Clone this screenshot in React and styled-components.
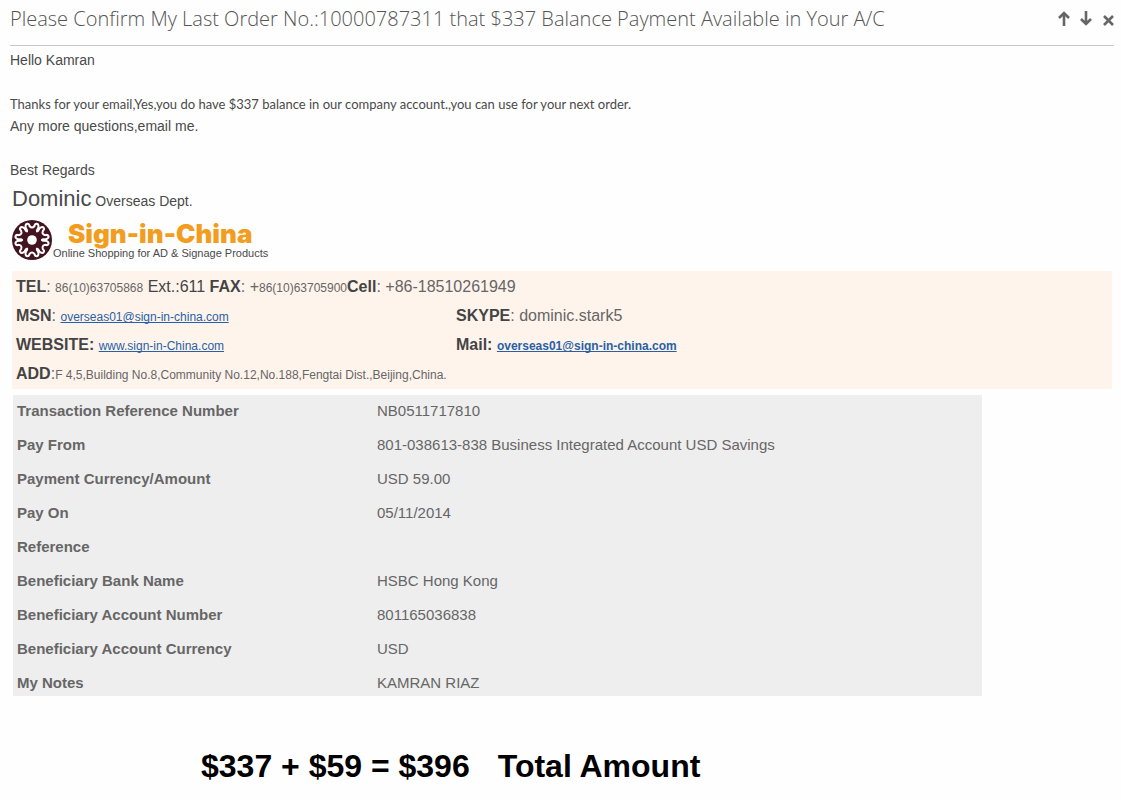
import React from "react";
import styled, { createGlobalStyle } from "styled-components";

const GlobalStyle = createGlobalStyle`
  body {
    margin: 0;
    background: #fefefe;
    color: #4a4a4a;
    font-family: "Liberation Sans", Arial, sans-serif;
    font-size: 14px;
    line-height: 22px;
  }
`;

const Page = styled.main`
  padding: 0 7px 8px 10px;
`;

const Header = styled.header`
  display: flex;
  justify-content: space-between;
  align-items: center;
  height: 46px;
  box-sizing: border-box;
  padding-bottom: 7px;
  border-bottom: 1px solid #c8c8c8;
  margin-bottom: 3px;
`;

const Title = styled.h1`
  margin: 0;
  font-family: "Open Sans", sans-serif;
  font-size: 20px;
  font-weight: 300;
  line-height: 28px;
  color: #555;
`;

const Actions = styled.div`
  display: flex;
  gap: 8px;
`;

const IconButton = styled.button`
  display: flex;
  padding: 0;
  border: 0;
  background: none;
  color: #666;
  cursor: pointer;
`;

const Line = styled.p`
  margin: 0;
  min-height: 22px;
`;

const Note = styled(Line)`
  font-family: Lato, sans-serif;
  font-size: 13px;
`;

const Signature = styled.p`
  margin: 6px 0 0 2px;
  line-height: 24px;
`;

const Name = styled.span`
  font-size: 22px;
`;

const Brand = styled.div`
  display: flex;
  align-items: center;
  gap: 1px;
  margin: 7px 0 11px 2px;
`;

const BrandName = styled.strong`
  display: block;
  padding-left: 15px;
  font-family: Inter, sans-serif;
  font-size: 26px;
  font-weight: 900;
  line-height: 26px;
  color: #f29d1e;
`;

const Tagline = styled.span`
  display: block;
  font-size: 11px;
  line-height: 12px;
`;

const Contact = styled.address`
  display: grid;
  grid-template-columns: 440px 1fr;
  margin: 0 2px 6px;
  padding: 1px 4px;
  background: #fff4ec;
  font-style: normal;
  font-size: 16px;
  line-height: 29px;
  color: #666;
`;

const Entry = styled.div`
  grid-column: ${(props) => (props.$wide ? "1 / -1" : "auto")};
`;

const Label = styled.b`
  color: #444;
`;

const Dark = styled.span`
  color: #444;
`;

const Small = styled.span`
  font-size: 12px;
  line-height: 16px;
`;

const Link = styled.a`
  font-size: 12px;
  font-weight: ${(props) => (props.$bold ? 700 : 400)};
  line-height: 16px;
  color: #2a5fa5;
  text-decoration-skip-ink: none;
`;

const Details = styled.div`
  max-width: 965px;
  margin-left: 3px;
  padding: 6px 0 3px 4px;
  background: #eee;
`;

const Table = styled.table`
  width: 100%;
  border-collapse: collapse;
  font-size: 15px;
  line-height: 20px;
  color: #666;

  th,
  td {
    padding: 0 0 14px;
    text-align: left;
  }

  th {
    width: 360px;
  }

  tr:last-child > * {
    padding-bottom: 0;
  }
`;

const Total = styled.div`
  display: flex;
  gap: 28px;
  margin: 51px 0 0 191px;
  font-size: 32px;
  font-weight: 700;
  line-height: 38px;
  color: #000;
`;

const details = [
  ["Transaction Reference Number", "NB0511717810"],
  ["Pay From", "801-038613-838 Business Integrated Account USD Savings"],
  ["Payment Currency/Amount", "USD 59.00"],
  ["Pay On", "05/11/2014"],
  ["Reference", ""],
  ["Beneficiary Bank Name", "HSBC Hong Kong"],
  ["Beneficiary Account Number", "801165036838"],
  ["Beneficiary Account Currency", "USD"],
  ["My Notes", "KAMRAN RIAZ"],
];

const ICONS = {
  up: "M7 15V2M2 7l5-5 5 5",
  down: "M7 0v13M2 8l5 5 5-5",
  close: "M3 5l9 9M12 5l-9 9",
};

const Action = ({ icon, label }) => (
  <IconButton type="button" aria-label={label}>
    <svg width="14" height="16" viewBox="1 0 14 16">
      <path
        d={ICONS[icon]}
        transform="translate(2 0)"
        fill="none"
        stroke="currentColor"
        strokeWidth="2.6"
      />
    </svg>
  </IconButton>
);

const Emblem = () => (
  <svg width="40" height="40" viewBox="-20 -20 40 40" aria-hidden="true">
    <circle r="20" fill="#43131f" />
    <g fill="none" stroke="#fff" strokeWidth="2" strokeLinecap="round">
      {[0, 60, 120, 180, 240, 300].map((angle) => (
        <path
          key={angle}
          transform={`rotate(${angle})`}
          d="M-5-8.700C-4-10-6.500-11-6.500-13.500C-6.500-17-3-17-2.500-14Q0-11 2.500-14C3-17 6.500-17 6.500-13.500C6.500-11 4-10 5-8.700"
        />
      ))}
    </g>
    <circle r="4.800" fill="#fff" />
  </svg>
);

const App = () => (
  <Page>
    <GlobalStyle />
    <Header>
      <Title>
        Please Confirm My Last Order No.:10000787311 that $337 Balance Payment
        Available in Your A/C
      </Title>
      <Actions>
        <Action icon="up" label="Previous message" />
        <Action icon="down" label="Next message" />
        <Action icon="close" label="Close" />
      </Actions>
    </Header>

    <Line>Hello Kamran</Line>
    <Line />
    <Note>
      Thanks for your email,Yes,you do have $337 balance in our company
      account.,you can use for your next order.
    </Note>
    <Line>Any more questions,email me.</Line>
    <Line />
    <Line>Best Regards</Line>

    <Signature>
      <Name>Dominic</Name> Overseas Dept.
    </Signature>
    <Brand>
      <Emblem />
      <div>
        <BrandName>Sign-in-China</BrandName>
        <Tagline>Online Shopping for AD &amp; Signage Products</Tagline>
      </div>
    </Brand>

    <Contact>
      <Entry $wide>
        <Label>TEL</Label>: <Small>86(10)63705868</Small>{" "}
        <Dark>Ext.:611</Dark> <Label>FAX</Label>: +
        <Small>86(10)63705900</Small>
        <Label>Cell</Label>: +86-18510261949
      </Entry>
      <Entry>
        <Label>MSN</Label>:{" "}
        <Link href="mailto:overseas01@sign-in-china.com">
          overseas01@sign-in-china.com
        </Link>
      </Entry>
      <Entry>
        <Label>SKYPE</Label>: dominic.stark5
      </Entry>
      <Entry>
        <Label>WEBSITE:</Label>{" "}
        <Link href="http://www.sign-in-China.com">www.sign-in-China.com</Link>
      </Entry>
      <Entry>
        <Label>Mail:</Label>{" "}
        <Link $bold href="mailto:overseas01@sign-in-china.com">
          overseas01@sign-in-china.com
        </Link>
      </Entry>
      <Entry $wide>
        <Label>ADD</Label>:
        <Small>
          F 4,5,Building No.8,Community No.12,No.188,Fengtai Dist.,Beijing,China.
        </Small>
      </Entry>
    </Contact>

    <Details>
      <Table>
        <tbody>
          {details.map(([label, value]) => (
            <tr key={label}>
              <th scope="row">{label}</th>
              <td>{value}</td>
            </tr>
          ))}
        </tbody>
      </Table>
    </Details>

    <Total>
      <span>$337 + $59 = $396</span>
      <span>Total Amount</span>
    </Total>
  </Page>
);

export default App;
